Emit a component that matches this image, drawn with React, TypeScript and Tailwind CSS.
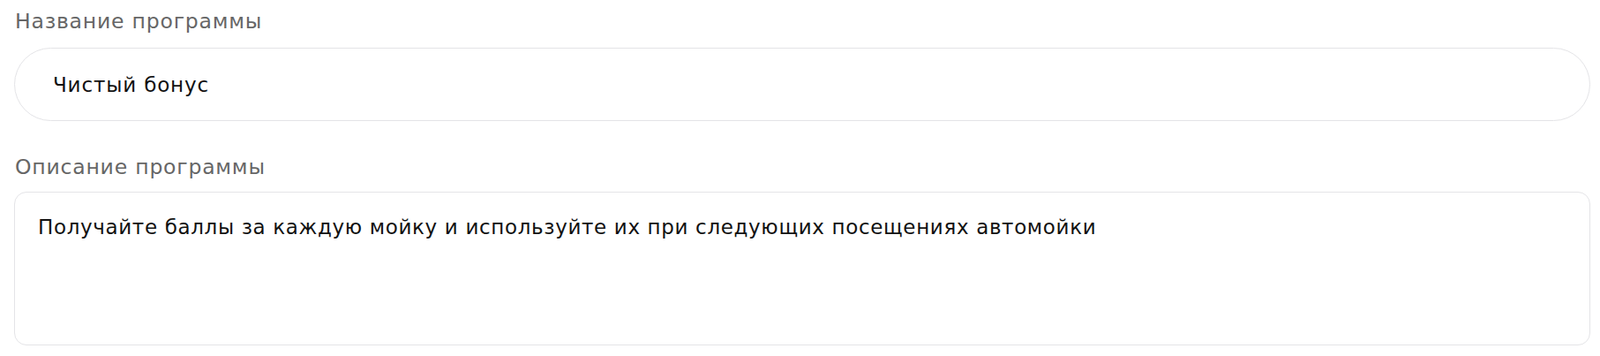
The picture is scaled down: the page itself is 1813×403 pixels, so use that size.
export default function App() {
  return (
    <main className="min-h-screen bg-white pl-[16px] pr-[11px] pt-[8px] font-['DejaVu_Sans','Noto_Sans',sans-serif]">
      <label className="block text-[23.5px] leading-[32px] tracking-[0.8px] text-[#666666] pl-[1px]">Название программы</label>
      <input
        type="text"
        defaultValue="Чистый бонус"
        className="mt-[14px] block h-[83px] w-full rounded-full border border-[#e4e4e7] bg-white px-[43px] text-[23px] tracking-[0.85px] text-[#111111] outline-none"
      />

      <label className="mt-[36px] block text-[23.5px] leading-[32px] tracking-[0.8px] text-[#666666] pl-[1px]">Описание программы</label>
      <textarea
        defaultValue="Получайте баллы за каждую мойку и используйте их при следующих посещениях автомойки"
        className="mt-[12px] block h-[174px] w-full resize-none rounded-[14px] border border-[#e4e4e7] bg-white px-[26px] py-[21px] text-[23px] leading-[36px] tracking-[0.65px] text-[#111111] outline-none"
      />
    </main>
  )
}
